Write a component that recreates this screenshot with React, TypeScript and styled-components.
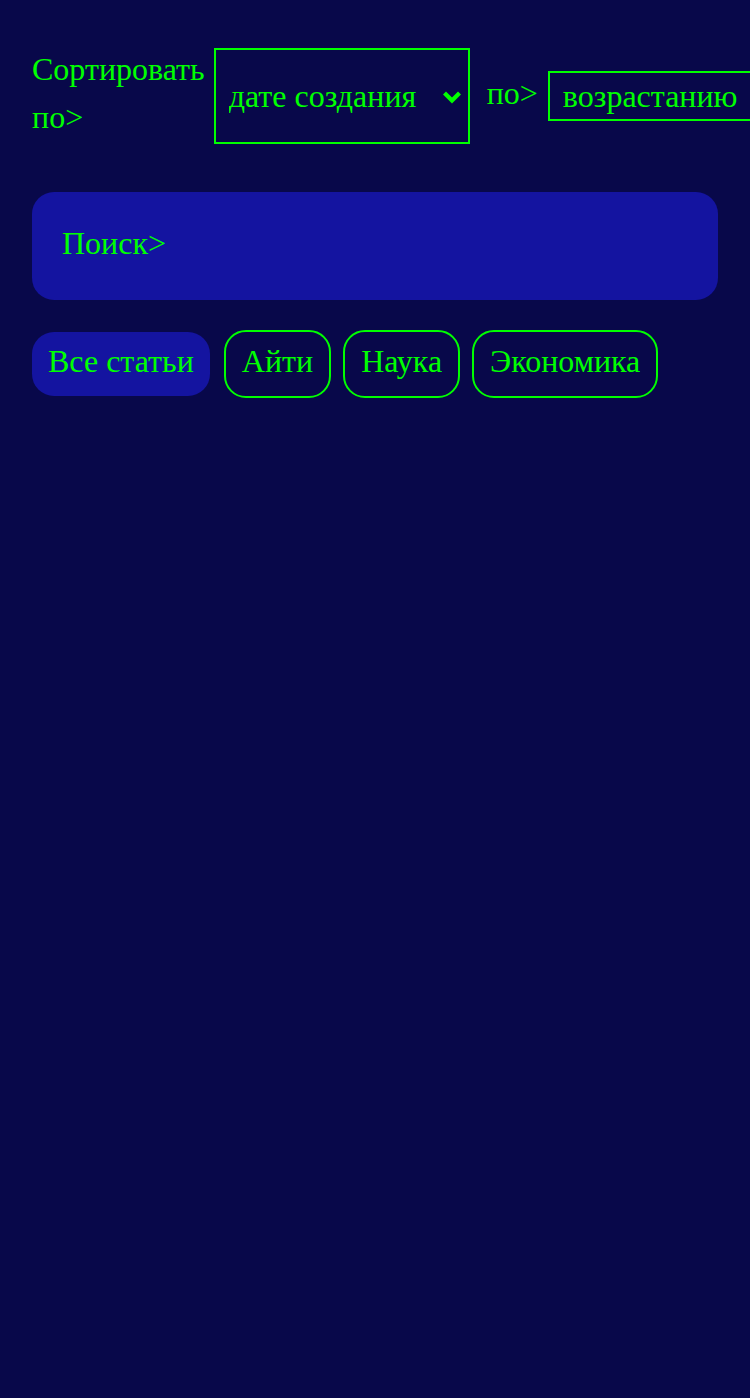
import React, { useState } from 'react';
import styled, { createGlobalStyle } from 'styled-components';

const GREEN = '#00ff00';
const BG = '#08084a';
const PANEL = '#1414a0';

const GlobalStyle = createGlobalStyle`
  html, body {
    margin: 0;
    padding: 0;
    background: ${BG};
    min-height: 100%;
  }
  body {
    font-family: "Liberation Serif", "Times New Roman", serif;
    color: ${GREEN};
    overflow: hidden;
  }
`;

const Page = styled.div`
  min-height: 1398px;
  padding: 48px 32px;
  box-sizing: border-box;
  background: ${BG};
`;

const SortRow = styled.div`
  display: flex;
  flex-wrap: nowrap;
  align-items: center;
`;

const SortLabel = styled.span`
  font-size: 32px;
  line-height: 48px;
  margin: -6px 9px 0 0;
`;

const SmallLabel = styled.span`
  font-size: 32px;
  line-height: 48px;
  margin: -6px 10px 0 17px;
  white-space: nowrap;
`;

const SelectWrap = styled.div`
  position: relative;
  flex-shrink: 0;
  display: flex;
`;

const Select = styled.select<{ tall?: boolean }>`
  appearance: none;
  -webkit-appearance: none;
  font-family: inherit;
  font-size: 32px;
  color: ${GREEN};
  background: ${BG};
  border: 2px solid ${GREEN};
  border-radius: 0;
  height: ${p => (p.tall ? 96 : 50)}px;
  width: ${p => (p.tall ? 256 : 244)}px;
  padding: 0 50px 0 13px;
  outline: none;
  cursor: pointer;
`;

const Chevron = styled.svg`
  position: absolute;
  right: 8px;
  top: 50%;
  margin-top: -6px;
  width: 20px;
  height: 14px;
  pointer-events: none;
`;

const SearchInput = styled.input`
  display: block;
  width: 100%;
  box-sizing: border-box;
  height: 108px;
  margin-top: 48px;
  padding: 0 30px 6px;
  border: none;
  border-radius: 22px;
  background: ${PANEL};
  color: ${GREEN};
  font-family: inherit;
  font-size: 32px;
  outline: none;
  &::placeholder {
    color: ${GREEN};
    opacity: 1;
  }
`;

const Chips = styled.div`
  display: flex;
  align-items: center;
  gap: 12px;
  margin-top: 30px;
`;

const Chip = styled.button<{ active?: boolean }>`
  font-family: inherit;
  font-size: 32px;
  line-height: 36px;
  color: ${GREEN};
  padding: 11px 16px 17px;
  border-radius: 22px;
  background: ${p => (p.active ? PANEL : 'transparent')};
  border: ${p => (p.active ? 'none' : `2px solid ${GREEN}`)};
  margin-right: ${p => (p.active ? 2 : 0)}px;
  cursor: pointer;
`;

const categories = ['Все статьи', 'Айти', 'Наука', 'Экономика'];

function Dropdown({ tall, options }: { tall?: boolean; options: [string, string][] }) {
  return (
    <SelectWrap>
      <Select tall={tall} defaultValue={options[0][0]}>
        {options.map(([v, label]) => (
          <option key={v} value={v}>
            {label}
          </option>
        ))}
      </Select>
      <Chevron viewBox="0 0 20 14">
        <polyline
          points="2.5,3 10,10.5 17.5,3"
          fill="none"
          stroke={GREEN}
          strokeWidth="4.2"
          strokeLinecap="butt"
          strokeLinejoin="miter"
        />
      </Chevron>
    </SelectWrap>
  );
}

export default function App() {
  const [active, setActive] = useState(0);
  return (
    <Page>
      <GlobalStyle />
      <SortRow>
        <SortLabel>Сортировать по&gt;</SortLabel>
        <Dropdown
          tall
          options={[
            ['created', 'дате создания'],
            ['title', 'названию'],
          ]}
        />
        <SmallLabel>по&gt;</SmallLabel>
        <Dropdown
          options={[
            ['asc', 'возрастанию'],
            ['desc', 'убыванию'],
          ]}
        />
      </SortRow>
      <SearchInput placeholder="Поиск>" />
      <Chips>
        {categories.map((c, i) => (
          <Chip key={c} active={i === active} onClick={() => setActive(i)}>
            {c}
          </Chip>
        ))}
      </Chips>
    </Page>
  );
}
